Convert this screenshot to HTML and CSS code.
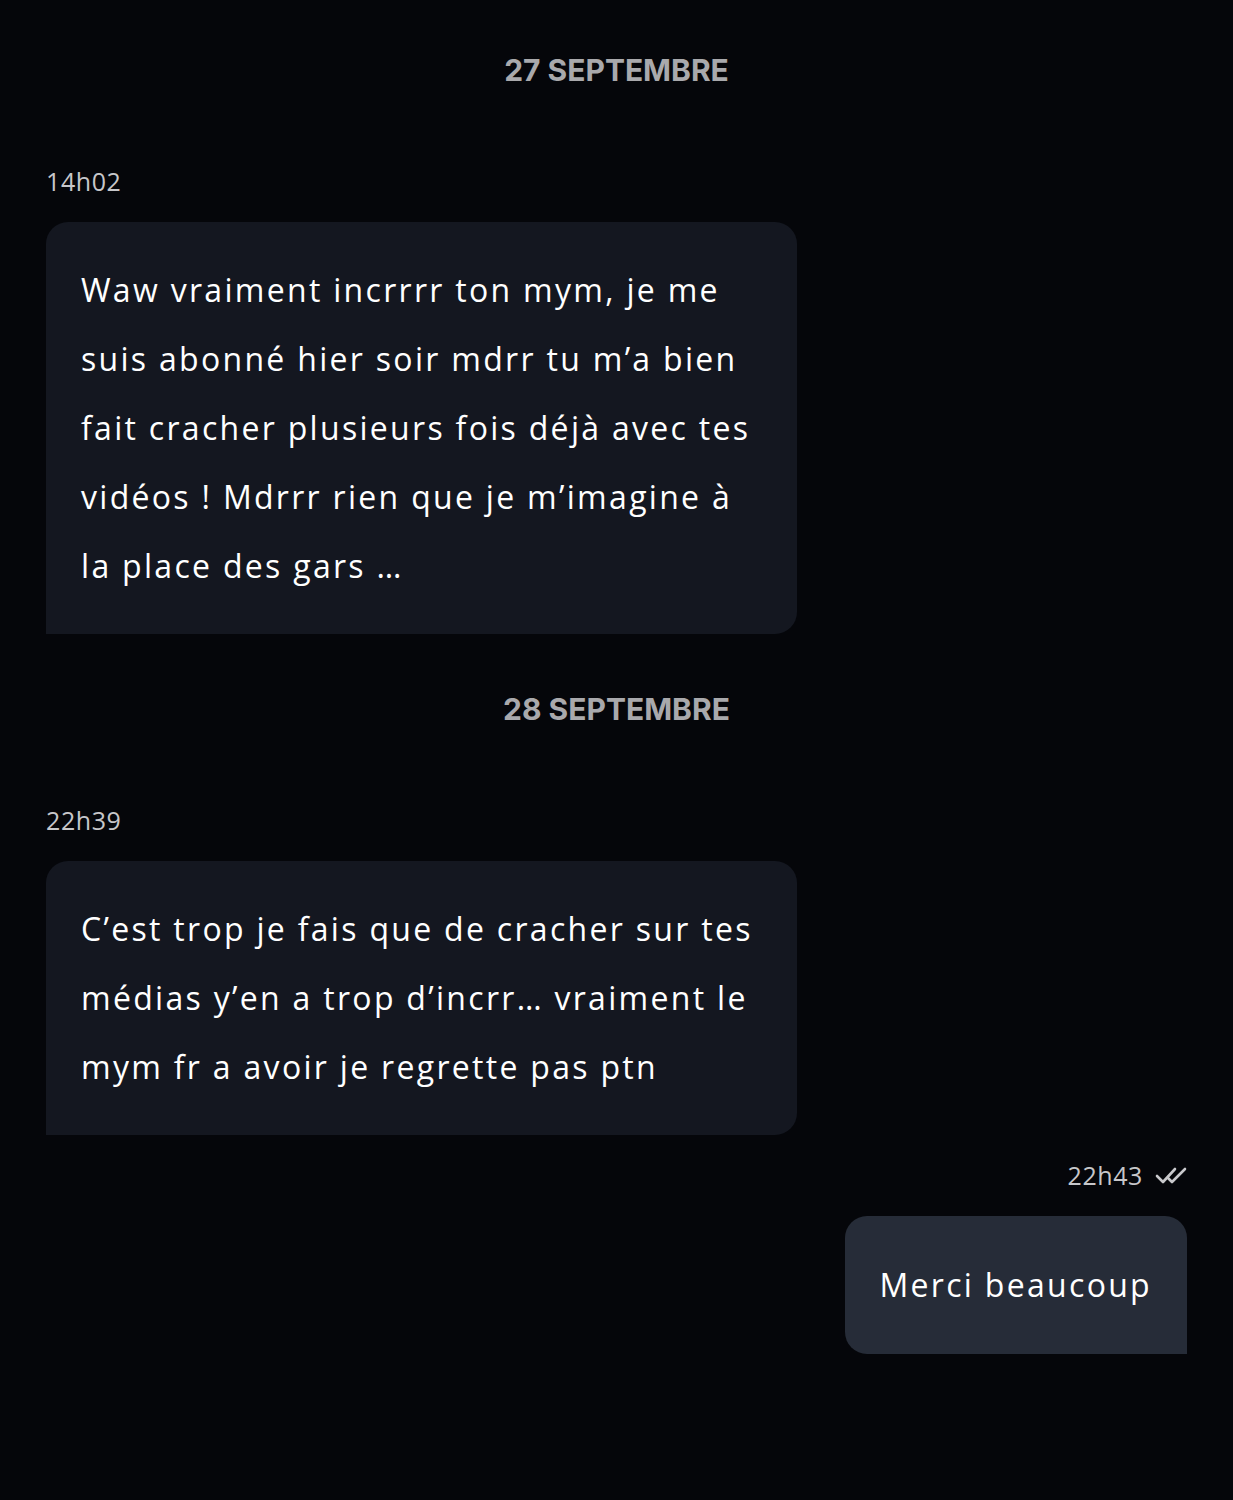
FILE: index.html
```html
<!DOCTYPE html>
<html lang="fr">
<head>
    <meta charset="UTF-8">
    <meta name="viewport" content="width=device-width, initial-scale=1.0">
    <title>Messages</title>
    <link rel="stylesheet" href="styles.css">
</head>
<body>
    <div class="chat">
        <div class="day">27 SEPTEMBRE</div>

        <div class="msg in">
            <div class="time">14h02</div>
            <div class="bubble">Waw vraiment incrrrr ton mym, je me<br>suis abonné hier soir mdrr tu m’a bien<br>fait cracher plusieurs fois déjà avec tes<br>vidéos ! Mdrrr rien que je m’imagine à<br>la place des gars …</div>
        </div>

        <div class="day">28 SEPTEMBRE</div>

        <div class="msg in">
            <div class="time">22h39</div>
            <div class="bubble">C’est trop je fais que de cracher sur tes<br>médias y’en a trop d’incrr… vraiment le<br>mym fr a avoir je regrette pas ptn</div>
        </div>

        <div class="msg out">
            <div class="time">22h43
                <svg class="seen" width="32" height="18" viewBox="0 0 32 18" fill="none" stroke="#c9c9cc" stroke-width="2.6" stroke-linecap="round" stroke-linejoin="round">
                    <path d="M2 10l6 6L20 3"/>
                    <path d="M13 12l4 4L30 3"/>
                </svg>
            </div>
            <div class="bubble">Merci beaucoup</div>
        </div>
    </div>
</body>
</html>
```

FILE: styles.css
```css
body {
    margin: 0;
    background: #05060a;
    font-family: 'Open Sans', 'Inter', sans-serif;
    color: #ffffff;
}

.chat {
    padding: 50px 46px 100px;
    display: flex;
    flex-direction: column;
}

.day {
    text-align: center;
    font-family: 'Inter', sans-serif;
    font-weight: 700;
    font-size: 30px;
    line-height: 40px;
    color: #a9a9ac;
    margin: 30px 0 76px;
}

.day:first-child {
    margin-top: 0;
}

.msg {
    display: flex;
    flex-direction: column;
    gap: 26px;
    margin-bottom: 25px;
}

.msg.out {
    align-items: flex-end;
}

.time {
    display: flex;
    align-items: center;
    gap: 12px;
    font-size: 25px;
    letter-spacing: 0.6px;
    line-height: 30px;
    color: #c7c7ca;
}

.bubble {
    font-size: 32px;
    letter-spacing: 2.3px;
    line-height: 69px;
    white-space: nowrap;
    padding: 33px 35px 34px;
    border-radius: 22px;
}

.msg.in .bubble {
    width: 681px;
    background: #141720;
    border-bottom-left-radius: 0;
}

.msg.out .bubble {
    padding: 34px 35px 35px;
    background: #262c38;
    border-bottom-right-radius: 0;
}
```
